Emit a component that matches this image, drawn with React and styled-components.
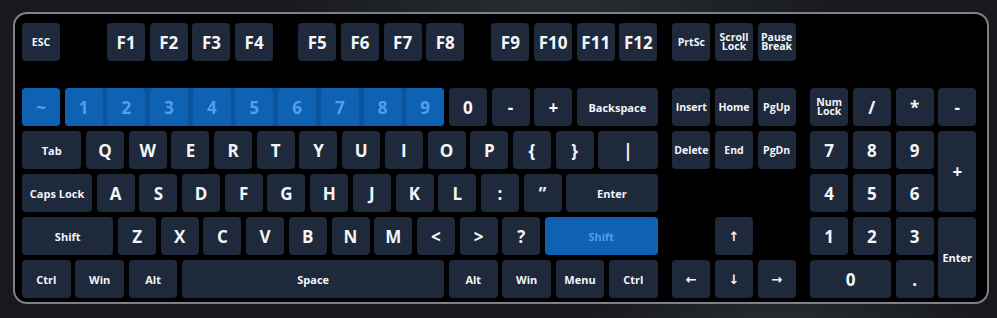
import React from 'react';
import styled, { createGlobalStyle, css } from 'styled-components';

const U = 42.7;
const G = 4.7;
const kw = (w) => w * U - G;

const Global = createGlobalStyle`
  html, body {
    margin: 0;
    height: 100%;
  }
  body {
    background:
      radial-gradient(ellipse 420px 120px at 560px 0px, #2a2d33 0%, rgba(0,0,0,0) 70%),
      radial-gradient(ellipse 300px 90px at 780px 330px, #2a2d32 0%, rgba(0,0,0,0) 70%),
      #17191d;
    font-family: 'Open Sans', 'DejaVu Sans', sans-serif;
    overflow: hidden;
  }
`;

const Frame = styled.div`
  box-sizing: border-box;
  width: 976px;
  margin: 12px 0 0 13px;
  padding: 9px 10px 4px 7px;
  background: #000;
  border: 2px solid #7c818a;
  border-radius: 14px;
  display: grid;
  grid-template-columns: ${kw(15)}px ${kw(3)}px ${kw(4)}px;
  column-gap: 14.5px;
  row-gap: 27px;
`;

const Row = styled.div`
  display: flex;
  gap: ${G}px;
`;

const Block = styled.div`
  display: flex;
  flex-direction: column;
  gap: 5px;
`;

const sizes = {
  char: css`font-size: 17px;`,
  word: css`font-size: 11px;`,
  small: css`font-size: 10.5px;`,
  tiny: css`font-size: 10.5px; line-height: 0.82;`,
  arrow: css`font-size: 13px;`,
};

const Key = styled.div`
  box-sizing: border-box;
  flex: none;
  width: ${(p) => kw(p.$w ?? 1)}px;
  height: 38px;
  border-radius: 4px;
  background: ${(p) => (p.$on ? '#0f61b3' : '#1e293b')};
  color: ${(p) => (p.$on ? '#4e9fee' : '#f3f5f8')};
  font-weight: 700;
  display: flex;
  align-items: center;
  justify-content: center;
  text-align: center;
  white-space: pre-line;
  margin-left: ${(p) => p.$skip ?? 0}px;
  ${(p) => sizes[p.$t ?? 'char']}
`;

const GridKey = styled(Key)`
  width: auto;
  height: auto;
  grid-column: ${(p) => p.$col ?? 'auto'};
  grid-row: ${(p) => p.$row ?? 'auto'};
`;

const Range = styled.div`
  display: flex;
  gap: ${G}px;
  background: #0b539c;
  border-radius: 4px;
`;

const Grid = styled.div`
  display: grid;
  grid-template-columns: repeat(${(p) => p.$cols}, 1fr);
  grid-template-rows: repeat(5, 38px);
  column-gap: ${G}px;
  row-gap: 5px;
`;

const k = (l, w = 1, t = 'char', extra = {}) => ({ l, w, t, ...extra });

const fnRow = [
  k('ESC', 1, 'small'),
  k('F1', 1, 'char', { skip: 42.4 }),
  k('F2'), k('F3'), k('F4'),
  k('F5', 1, 'char', { skip: 20.4 }),
  k('F6'), k('F7'), k('F8'),
  k('F9', 1, 'char', { skip: 22.4 }),
  k('F10'), k('F11'), k('F12'),
];

const rows = [
  [k('Tab', 1.5, 'word'), ...'QWERTYUIOP{}'.split('').map((c) => k(c)), k('|', 1.5)],
  [k('Caps Lock', 1.75, 'word'), ...'ASDFGHJKL:'.split('').map((c) => k(c)), k('”'), k('Enter', 2.25, 'word')],
  [k('Shift', 2.25, 'word'), ...'ZXCVBNM<>?'.split('').map((c) => k(c)), k('Shift', 2.75, 'word', { on: true })],
  [
    k('Ctrl', 1.25, 'word'), k('Win', 1.25, 'word'), k('Alt', 1.25, 'word'),
    k('Space', 6.25, 'word'),
    k('Alt', 1.25, 'word'), k('Win', 1.25, 'word'), k('Menu', 1.25, 'word'), k('Ctrl', 1.25, 'word'),
  ],
];

const nav = [
  k('Insert', 1, 'small', { col: 1, row: 1 }),
  k('Home', 1, 'small', { col: 2, row: 1 }),
  k('PgUp', 1, 'small', { col: 3, row: 1 }),
  k('Delete', 1, 'small', { col: 1, row: 2 }),
  k('End', 1, 'small', { col: 2, row: 2 }),
  k('PgDn', 1, 'small', { col: 3, row: 2 }),
  k('↑', 1, 'arrow', { col: 2, row: 4 }),
  k('←', 1, 'arrow', { col: 1, row: 5 }),
  k('↓', 1, 'arrow', { col: 2, row: 5 }),
  k('→', 1, 'arrow', { col: 3, row: 5 }),
];

const numpad = [
  k('Num\nLock', 1, 'tiny'), k('/'), k('*'), k('-'),
  k('7'), k('8'), k('9'), k('+', 1, 'char', { row: 'span 2' }),
  k('4'), k('5'), k('6'),
  k('1'), k('2'), k('3'), k('Enter', 1, 'word', { row: 'span 2' }),
  k('0', 1, 'char', { col: 'span 2' }), k('.'),
];

const renderKey = (e, i) => (
  <Key key={i} $w={e.w} $t={e.t} $on={e.on} $skip={e.skip}>
    {e.l}
  </Key>
);

const renderGridKey = (e, i) => (
  <GridKey key={i} $t={e.t} $col={e.col} $row={e.row}>
    {e.l}
  </GridKey>
);

const App = () => {
  return (
    <>
      <Global />
      <Frame>
        <Row>{fnRow.map(renderKey)}</Row>
        <Row>
          <Key $t="small">PrtSc</Key>
          <Key $t="tiny">{'Scroll\nLock'}</Key>
          <Key $t="tiny">{'Pause\nBreak'}</Key>
        </Row>
        <div />

        <Block>
          <Row>
            <Key $on>~</Key>
            <Range>
              {'123456789'.split('').map((c) => (
                <Key key={c} $on>
                  {c}
                </Key>
              ))}
            </Range>
            <Key>0</Key>
            <Key>-</Key>
            <Key>+</Key>
            <Key $w={2} $t="word">Backspace</Key>
          </Row>
          {rows.map((row, i) => (
            <Row key={i}>{row.map(renderKey)}</Row>
          ))}
        </Block>
        <Grid $cols={3}>{nav.map(renderGridKey)}</Grid>
        <Grid $cols={4}>{numpad.map(renderGridKey)}</Grid>
      </Frame>
    </>
  );
};

export default App;
